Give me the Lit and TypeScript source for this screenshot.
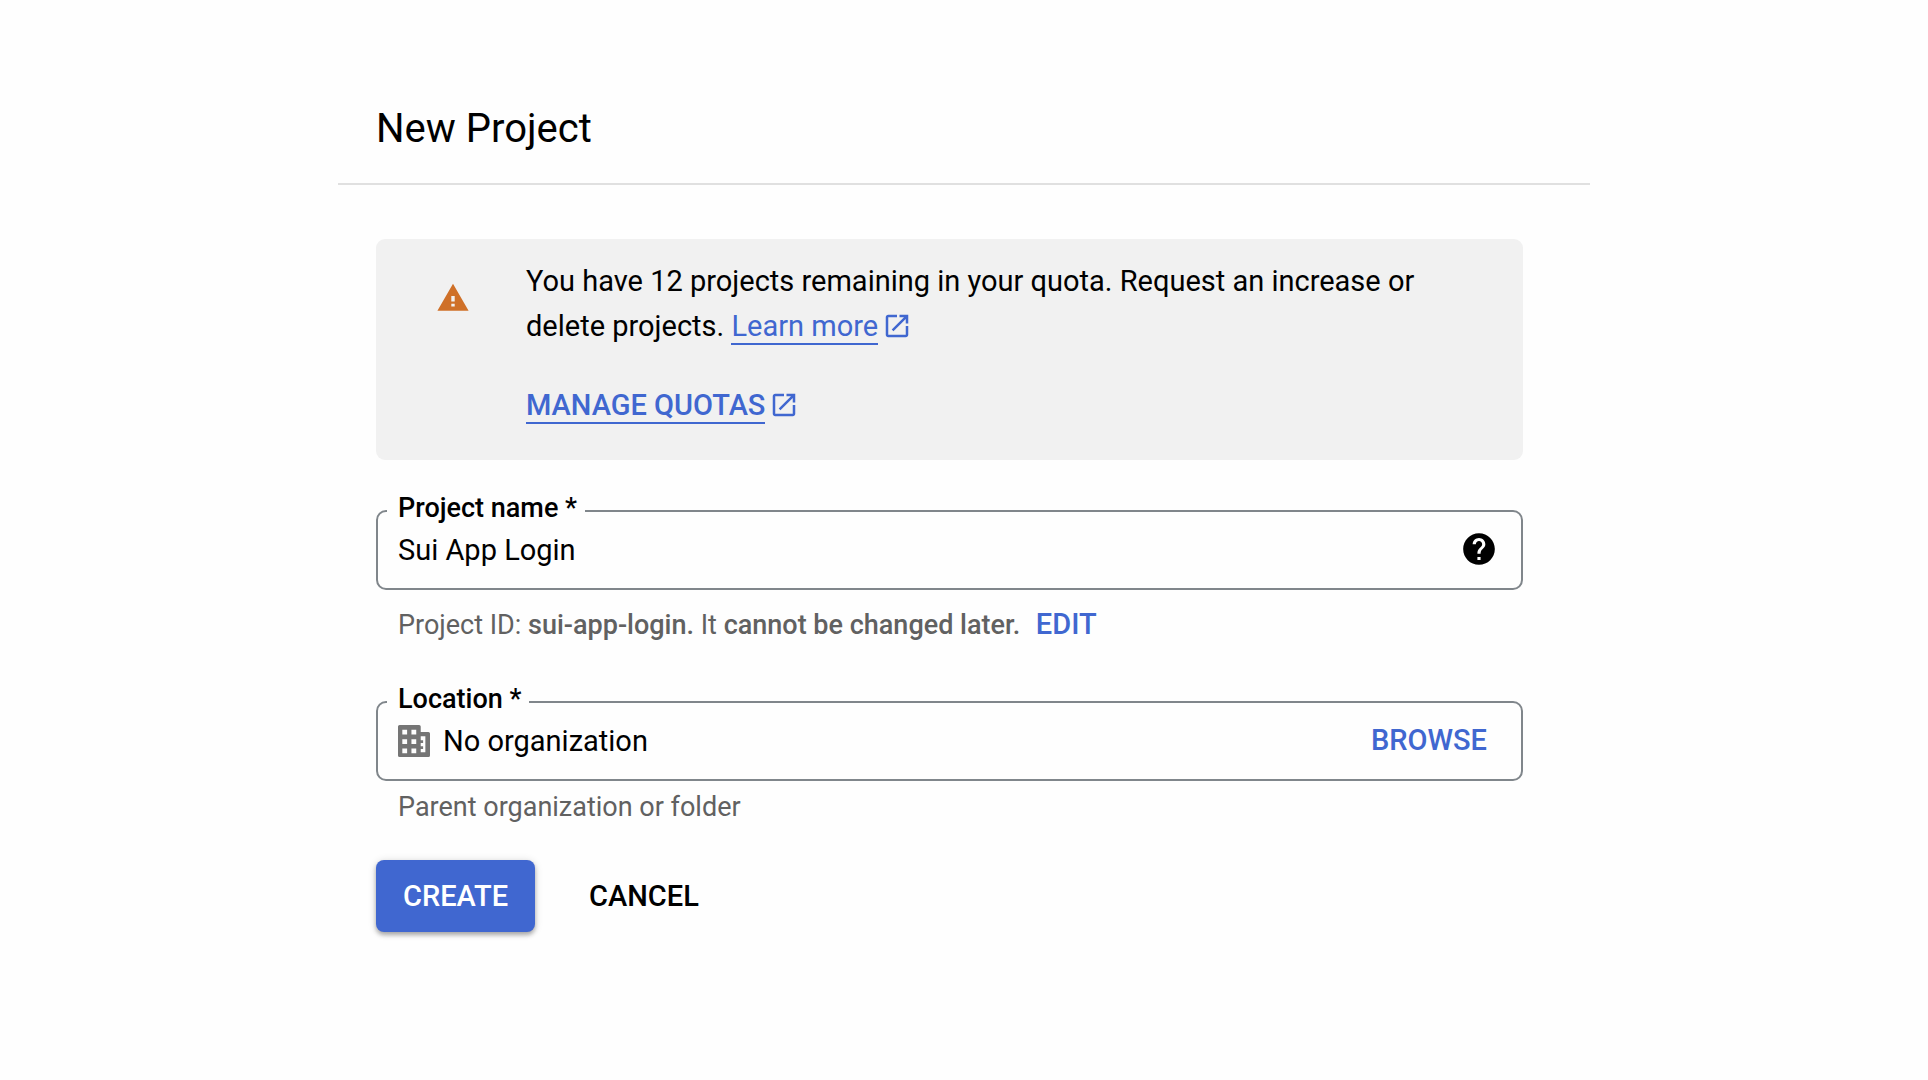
import { LitElement, html, css, svg } from "lit";
import { customElement, state } from "lit/decorators.js";

const glyph = (cls: string, path: string, box = "0 0 24 24") =>
  html`<svg class=${cls} viewBox=${box} aria-hidden="true">${svg`<path d=${path}></path>`}</svg>`;

const ICONS = {
  warning: "M1 21h22L12 2 1 21zm12.200-3h-2.400v-2h2.400v2zm0-3.500h-2.400v-4h2.400v4z",
  launch:
    "M19 19H5V5h7V3H5c-1.11 0-2 .9-2 2v14c0 1.1.89 2 2 2h14c1.1 0 2-.9 2-2v-7h-2v7zM14 3v2h3.59l-9.83 9.83 1.41 1.41L19 6.41V10h2V3h-7z",
  help: "M12 2C6.48 2 2 6.48 2 12s4.48 10 10 10 10-4.48 10-10S17.52 2 12 2zm1 17h-2v-2h2v2zm2.07-7.75l-.9.92C13.45 12.9 13 13.5 13 15h-2v-.5c0-1.1.45-2.1 1.17-2.83l1.24-1.26c.37-.36.59-.86.59-1.41 0-1.1-.9-2-2-2s-2 .9-2 2H8c0-2.21 1.79-4 4-4s4 1.790 4 4c0 .88-.36 1.680-.93 2.250z",
  organization:
    "M3 2H15.200Q16.200 2 16.200 3V6.300H21Q22 6.300 22 7.300V21Q22 22 21 22H3Q2 22 2 21V3Q2 2 3 2zM4.700 5v2.900h3V5zM10.400 5v2.900h3V5zM4.700 10.900v2.900h3v-2.900zM10.400 10.900v2.900h3v-2.900zM4.700 16.700v2.900h3v-2.900zM10.400 16.700v2.900h3v-2.900zM16.200 9.100v2.400h1.500v1.700h-1.500v2.100h1.500v1.700h-1.500v2h2.900V9.100z",
};

@customElement("app-root")
export class AppRoot extends LitElement {
  static styles = css`
    :host {
      display: block;
      min-height: 100vh;
      box-sizing: border-box;
      padding: 88px 24px 48px;
      background: #fefefe;
      color: #000;
      font-family: Roboto, "Liberation Sans", sans-serif;
      font-size: 29px;
      line-height: 45px;
    }
    .page {
      max-width: 1252px;
      margin: 0 auto;
    }
    .title {
      margin: 0;
      padding: 17px 38px 30px;
      border-bottom: 2px solid #e0e0e0;
      font-size: 40px;
      line-height: 48px;
      font-weight: 400;
    }
    .form {
      padding: 54px 67px 0 38px;
    }
    .notice {
      display: flex;
      align-items: flex-start;
      gap: 56px;
      padding: 20px 60px 32px;
      border-radius: 9px;
      background: #f1f1f1;
    }
    .notice p {
      margin: 0;
    }
    .warning {
      flex: none;
      width: 34px;
      margin-top: 22px;
      fill: #cf7028;
    }
    .notice .quota {
      margin-top: 34px;
      font-weight: 500;
    }
    .link {
      color: #4067d0;
      text-decoration: none;
      white-space: nowrap;
    }
    .link span {
      border-bottom: 2px solid #4067d0;
    }
    .launch {
      width: 30px;
      margin-left: 4px;
      vertical-align: -5px;
      fill: #4067d0;
    }
    .field {
      position: relative;
      display: flex;
      align-items: center;
      gap: 13px;
      height: 80px;
      margin-top: 50px;
      padding: 0 23px 0 20px;
      box-sizing: border-box;
      border: 2px solid #80868b;
      border-radius: 10px;
    }
    .label {
      position: absolute;
      top: -20px;
      left: 9px;
      padding: 0 8px 0 11px;
      background: #fefefe;
      font-size: 27px;
      line-height: 32px;
      font-weight: 500;
    }
    .value {
      flex: 1;
      min-width: 0;
      padding: 0;
      border: 0;
      outline: 0;
      background: none;
      color: inherit;
      font: inherit;
    }
    .icon {
      flex: none;
      width: 38px;
    }
    .organization {
      flex: none;
      width: 32px;
      fill: #757575;
    }
    button {
      padding: 0;
      border: 0;
      background: none;
      color: inherit;
      font: inherit;
      font-weight: 500;
      cursor: pointer;
    }
    .icon-button {
      display: flex;
    }
    .field button {
      margin-bottom: 2px;
    }
    .action {
      color: #4067d0;
    }
    .field .action {
      padding: 0 11px;
    }
    .hint {
      margin: 4px 22px 0;
      color: #616161;
      font-size: 27px;
    }
    .project-id {
      margin: 12px 22px 53px;
    }
    .hint b {
      font-weight: 500;
    }
    .hint .action {
      margin-left: 9px;
      font-size: 29px;
    }
    .actions {
      display: flex;
      gap: 27px;
      margin-top: 30px;
    }
    .button {
      height: 72px;
      padding: 0 27px;
      border-radius: 8px;
    }
    .primary {
      background: #4067d0;
      color: #fff;
      box-shadow: 0 3px 4px rgba(0, 0, 0, 0.28), 0 1px 8px rgba(0, 0, 0, 0.14);
    }
  `;

  @state() private projectName = "Sui App Login";
  @state() private location = "No organization";

  private get projectId() {
    return this.projectName.trim().toLowerCase().replace(/[^a-z0-9]+/g, "-");
  }

  render() {
    return html`
      <main class="page">
        <h1 class="title">New Project</h1>
        <form class="form" @submit=${(e: Event) => e.preventDefault()}>
          <section class="notice">
            ${glyph("warning", ICONS.warning)}
            <div>
              <p>
                You have 12 projects remaining in your quota. Request an increase or delete projects.
                <a class="link" href="#learn"><span>Learn more</span>${glyph("launch", ICONS.launch)}</a>
              </p>
              <p class="quota">
                <a class="link" href="#quotas"><span>MANAGE QUOTAS</span>${glyph("launch", ICONS.launch)}</a>
              </p>
            </div>
          </section>
          <div class="field">
            <label class="label" for="name">Project name *</label>
            <input
              class="value"
              id="name"
              .value=${this.projectName}
              @input=${(e: Event) => (this.projectName = (e.target as HTMLInputElement).value)}
            />
            <button class="icon-button" type="button" aria-label="Help">${glyph("icon", ICONS.help)}</button>
          </div>
          <p class="hint project-id">
            Project ID: <b>${this.projectId}.</b> It <b>cannot be changed later.</b>
            <button class="action" type="button">EDIT</button>
          </p>
          <div class="field">
            <label class="label" for="location">Location *</label>
            ${glyph("organization", ICONS.organization, "2 2 20 20")}
            <input class="value" id="location" readonly .value=${this.location} />
            <button class="action" type="button">BROWSE</button>
          </div>
          <p class="hint">Parent organization or folder</p>
          <div class="actions">
            <button class="button primary" type="submit">CREATE</button>
            <button class="button" type="button">CANCEL</button>
          </div>
        </form>
      </main>
    `;
  }
}
